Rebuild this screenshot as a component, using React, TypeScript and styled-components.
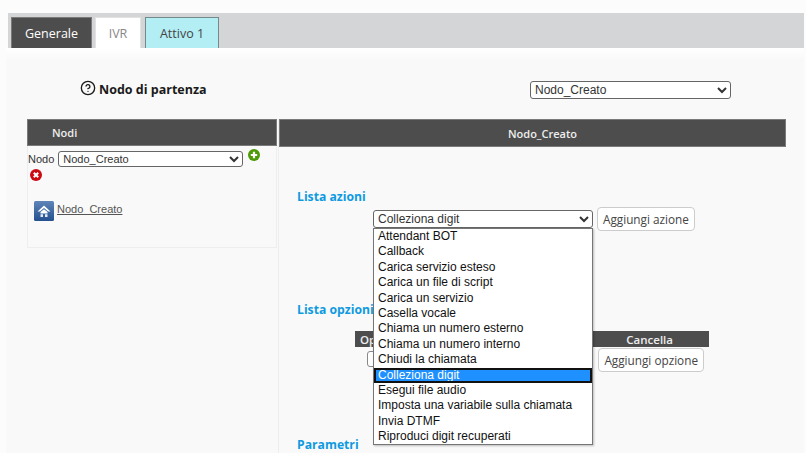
import styled, { createGlobalStyle } from "styled-components";
import { CircleHelp } from "lucide-react";

const actionOptions = [
  "Attendant BOT",
  "Callback",
  "Carica servizio esteso",
  "Carica un file di script",
  "Carica un servizio",
  "Casella vocale",
  "Chiama un numero esterno",
  "Chiama un numero interno",
  "Chiudi la chiamata",
  "Colleziona digit",
  "Esegui file audio",
  "Imposta una variabile sulla chiamata",
  "Invia DTMF",
  "Riproduci digit recuperati",
];

function PlusIcon(): JSX.Element {
  return (
    <svg width="12" height="12" viewBox="0 0 12 12">
      <circle cx="6" cy="6" r="6" fill="#4c9a06" />
      <path d="M6 2.800v6.400M2.800 6h6.400" stroke="#fff" strokeWidth="2.200" />
    </svg>
  );
}

function RemoveIcon(): JSX.Element {
  return (
    <svg width="12" height="12" viewBox="0 0 12 12">
      <circle cx="6" cy="6" r="6" fill="#cc0a14" />
      <path d="M3.800 3.800l4.400 4.400M8.200 3.800l-4.400 4.400" stroke="#fff" strokeWidth="2" />
    </svg>
  );
}

function HomeIcon(): JSX.Element {
  return (
    <svg width="20" height="20" viewBox="0 0 20 20">
      <defs>
        <linearGradient id="homeBg" x1="0" y1="0" x2="0" y2="1">
          <stop offset="0" stopColor="#5f86b8" />
          <stop offset="1" stopColor="#25508f" />
        </linearGradient>
      </defs>
      <rect width="20" height="20" rx="1.5" fill="url(#homeBg)" />
      <path d="M10 4.500L3.500 10.500h2.300L10 7l4.200 3.500h2.300z" fill="#fff" />
      <path d="M6.500 11L10 8.200l3.500 2.800v1.500h-7z" fill="#fff" />
      <path d="M6.500 13.300h2.500V16H6.500zM11 13.300h2.500V16H11z" fill="#e4ebf4" />
    </svg>
  );
}

export default function App(): JSX.Element {
  return (
    <Page>
      <GlobalStyle />
      <TabBar>
        <Tab $kind="dark">Generale</Tab>
        <Tab $kind="light">IVR</Tab>
        <Tab $kind="cyan">Attivo 1</Tab>
      </TabBar>
      <Panel>
        <TitleRow>
          <Title>
            <HelpIcon size={16} strokeWidth={2} />
            Nodo di partenza
          </Title>
          <TopSelect defaultValue="Nodo_Creato">
            <option>Nodo_Creato</option>
          </TopSelect>
        </TitleRow>
        <Columns>
          <LeftColumn>
            <NodesHeader $align="left">Nodi</NodesHeader>
            <NodeCard>
              <NodeControls>
                <NodeLabel>Nodo</NodeLabel>
                <NodeSelect defaultValue="Nodo_Creato">
                  <option>Nodo_Creato</option>
                </NodeSelect>
                <AddButton>
                  <PlusIcon />
                </AddButton>
                <RemoveButton>
                  <RemoveIcon />
                </RemoveButton>
              </NodeControls>
              <NodeLinkRow>
                <HomeIcon />
                <NodeLink href="#">Nodo_Creato</NodeLink>
              </NodeLinkRow>
            </NodeCard>
          </LeftColumn>
          <RightColumn>
            <ColumnHeader $align="center">Nodo_Creato</ColumnHeader>
            <Detail>
              <SectionTitle>Lista azioni</SectionTitle>
              <ActionRow>
                <ActionSelectWrap>
                  <ActionSelect defaultValue="Colleziona digit">
                    <option>Colleziona digit</option>
                  </ActionSelect>
                  <OptionList>
                    {actionOptions.map((name) => (
                      <OptionItem key={name} $selected={name === "Colleziona digit"}>
                        {name}
                      </OptionItem>
                    ))}
                  </OptionList>
                </ActionSelectWrap>
                <ActionButton>Aggiungi azione</ActionButton>
              </ActionRow>
              <OptionsTitle>Lista opzioni</OptionsTitle>
              <OptionsBlock>
                <OptionsHeader>
                  <span>Opzione</span>
                  <DeleteHead>Cancella</DeleteHead>
                </OptionsHeader>
                <OptionsRow>
                  <OptionInput />
                  <ActionButton>Aggiungi opzione</ActionButton>
                </OptionsRow>
              </OptionsBlock>
              <ParamsTitle>Parametri</ParamsTitle>
            </Detail>
          </RightColumn>
        </Columns>
      </Panel>
    </Page>
  );
}

const GlobalStyle = createGlobalStyle`
  html, body {
    margin: 0;
    padding: 0;
    background: #fcfcfc;
  }
`;

const Page = styled.div`
  height: 453px;
  overflow: hidden;
  padding-top: 13px;
  box-sizing: border-box;
  font-family: "Open Sans", sans-serif;
`;

const TabBar = styled.div`
  display: flex;
  align-items: flex-end;
  gap: 3px;
  height: 35px;
  margin: 0 2px 0 8px;
  padding-left: 3px;
  background: #d4d5d7;
`;

const tabColors = {
  dark: "background: #4d4d4d; color: #fff; border-color: #7a7a7a; width: 81px;",
  light: "background: #fff; color: #888; border-color: #e2e2e2; width: 46px;",
  cyan: "background: #b2eef4; color: #444; border-color: #73898c; width: 74px; margin-left: 1px;",
};

const Tab = styled.div<{ $kind: keyof typeof tabColors }>`
  box-sizing: border-box;
  height: 31px;
  display: flex;
  align-items: center;
  justify-content: center;
  border-width: 1px 1px 0;
  border-style: solid;
  font-size: 12.5px;
  ${({ $kind }) => tabColors[$kind]}
`;

const Panel = styled.div`
  margin: 0 2px 0 6px;
  padding: 0 18px 0 21px;
  height: 405px;
  background: linear-gradient(#fff, #f9f9f9) no-repeat top / 100% 12px #f9f9f9;
`;

const TitleRow = styled.div`
  box-sizing: border-box;
  height: 71px;
  padding: 12px 55px 0 53px;
  display: flex;
  align-items: center;
  justify-content: space-between;
`;

const Title = styled.div`
  display: flex;
  align-items: center;
  gap: 3px;
  font-size: 12.5px;
  font-weight: 700;
  color: #1a1a1a;
`;

const HelpIcon = styled(CircleHelp)`
  margin-top: -3px;
`;

const BaseSelect = styled.select`
  box-sizing: border-box;
  font-family: "Liberation Sans", sans-serif;
  font-size: 12px;
  color: #333;
  background: #fff;
  border: 1px solid #666;
  border-radius: 3px;
`;

const TopSelect = styled(BaseSelect)`
  width: 201px;
  height: 18px;
`;

const Columns = styled.div`
  display: flex;
  gap: 2px;
`;

const LeftColumn = styled.div`
  width: 250px;
`;

const RightColumn = styled.div`
  width: 507px;
  border-left: 1px solid #eee;
  margin-left: -1px;
`;

const ColumnHeader = styled.div<{ $align: string }>`
  box-sizing: border-box;
  height: 28px;
  display: flex;
  align-items: center;
  justify-content: ${({ $align }) => ($align === "center" ? "center" : "flex-start")};
  padding-left: ${({ $align }) => ($align === "center" ? "20px" : "24px")};
  background: #4d4d4d;
  border: 1px solid #7a7a7a;
  color: #eee;
  font-size: 11px;
  font-weight: 600;
`;

const NodesHeader = styled(ColumnHeader)`
  height: 27px;
`;

const NodeCard = styled.div`
  box-sizing: border-box;
  height: 102px;
  padding: 4px 10px 0 0;
  border: 1px solid #eee;
  border-top: 0;
`;

const NodeControls = styled.div`
  display: flex;
  flex-wrap: wrap;
  align-items: flex-start;
`;

const NodeLabel = styled.span`
  font-family: "Liberation Sans", sans-serif;
  font-size: 11px;
  line-height: 18px;
  color: #333;
  margin-right: 4px;
`;

const NodeSelect = styled(BaseSelect)`
  width: 185px;
  height: 16px;
  font-size: 11px;
  margin-top: 1px;
`;

const AddButton = styled.span`
  display: flex;
  height: 12px;
  margin: -1px 0 0 5px;
`;

const RemoveButton = styled.span`
  display: flex;
  height: 12px;
  margin: 1px 0 0 2px;
`;

const NodeLinkRow = styled.div`
  display: flex;
  align-items: center;
  gap: 3px;
  margin: 20px 0 0 6px;
`;

const NodeLink = styled.a`
  font-family: "Liberation Sans", sans-serif;
  font-size: 11px;
  color: #555;
  margin-top: -4px;
`;

const Detail = styled.div`
  min-height: 320px;
  padding: 42px 0 0 18px;
`;

const SectionTitle = styled.div`
  font-size: 12.2px;
  font-weight: 700;
  line-height: 16px;
  color: #0f9ae0;
`;

const ActionRow = styled.div`
  display: flex;
  align-items: flex-start;
  gap: 4px;
  margin: 2px 0 0 76px;
`;

const ActionSelectWrap = styled.div`
  position: relative;
  margin-top: 3px;
`;

const ActionSelect = styled(BaseSelect)`
  display: block;
  width: 220px;
  height: 18px;
`;

const OptionList = styled.div`
  position: absolute;
  z-index: 5;
  top: 18px;
  left: 0;
  box-sizing: border-box;
  width: 220px;
  height: 217px;
  background: #fff;
  border: 1px solid #767676;
  box-shadow: 1px 1px 2px rgba(0, 0, 0, 0.25);
  font-family: "Liberation Sans", sans-serif;
  font-size: 12px;
`;

const OptionItem = styled.div<{ $selected: boolean }>`
  box-sizing: border-box;
  height: 15.4px;
  line-height: 15.4px;
  padding-left: 4px;
  color: ${({ $selected }) => ($selected ? "#fff" : "#111")};
  background: ${({ $selected }) => ($selected ? "#1e90ff" : "transparent")};
  outline: ${({ $selected }) => ($selected ? "2px solid #111" : "none")};
  outline-offset: -2px;
  white-space: nowrap;
`;

const ActionButton = styled.button`
  box-sizing: border-box;
  height: 24px;
  padding: 0 5px;
  background: #fff;
  border: 1px solid #ccc;
  border-radius: 4px;
  font-family: "Open Sans", sans-serif;
  font-size: 11.75px;
  color: #444;
  white-space: nowrap;
`;

const OptionsTitle = styled(SectionTitle)`
  margin-top: 71px;
`;

const OptionsBlock = styled.div`
  margin: 13px 0 0 58px;
  width: 354px;
`;

const OptionsHeader = styled.div`
  height: 16px;
  display: flex;
  align-items: center;
  padding-left: 5px;
  background: #4d4d4d;
  color: #eee;
  font-size: 11.5px;
  font-weight: 600;
`;

const DeleteHead = styled.span`
  margin-left: auto;
  margin-right: 36px;
`;

const OptionsRow = styled.div`
  display: flex;
  align-items: flex-start;
  justify-content: space-between;
  padding: 1px 5px 0 12px;
`;

const OptionInput = styled.input`
  box-sizing: border-box;
  width: 60px;
  height: 16px;
  margin-top: 3px;
  border: 1px solid #888;
  border-radius: 3px;
`;

const ParamsTitle = styled(SectionTitle)`
  margin-top: 65px;
`;
